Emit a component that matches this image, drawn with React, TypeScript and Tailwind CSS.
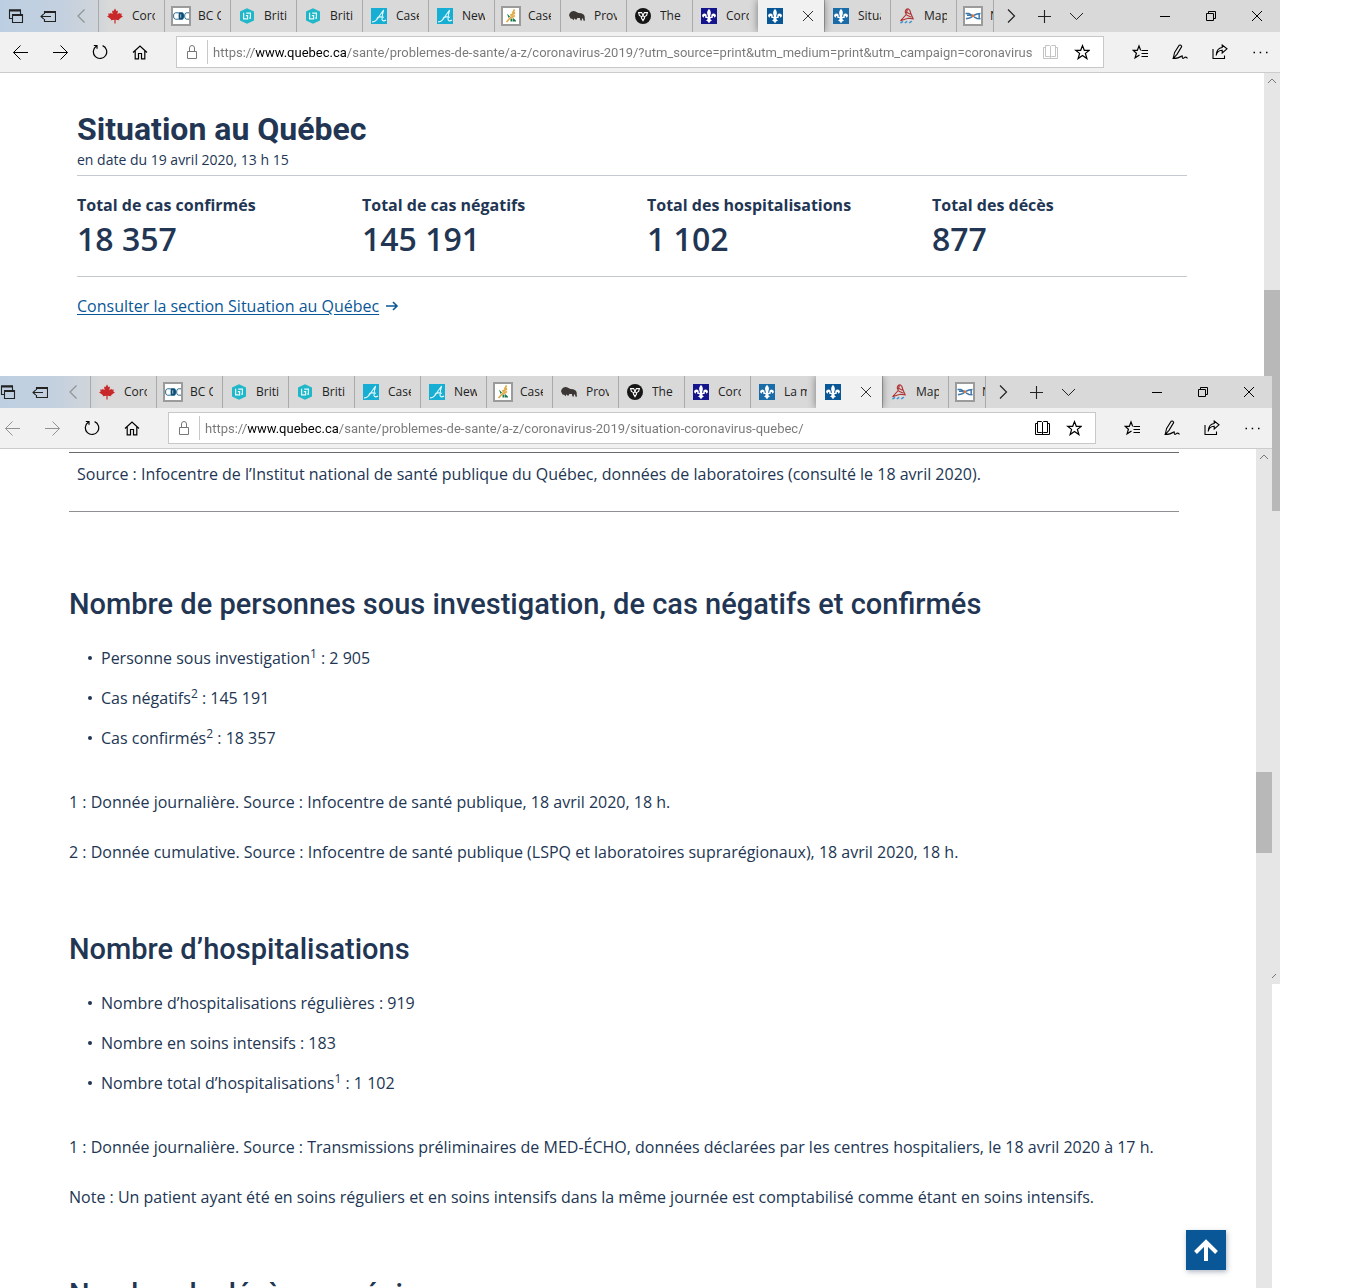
import type { ReactNode } from "react";

type IconProps = { children: ReactNode; size?: string; dim?: boolean };

function Glyph({ children, size = "size-4", dim = false }: IconProps) {
  return (
    <svg
      viewBox="0 0 16 16"
      fill="none"
      stroke="currentColor"
      strokeWidth="1"
      aria-hidden="true"
      className={`${size} shrink-0 ${dim ? "text-[#929292]" : ""}`}
    >
      {children}
    </svg>
  );
}

/* ---------- favicons ---------- */

function MapleLeaf() {
  return (
    <svg viewBox="0 0 16 16" className="size-4" aria-hidden="true">
      <path
        fill="#c8282a"
        d="M8 .6 9.6 3.2 11 2.5 10.4 6.2 12.4 4.7 12.9 5.8 15 5.4 14.2 7.5 16 8.3 12 11.2 12.3 12.2 8.6 11.8 8.6 15.5H7.4L7.4 11.8 3.7 12.2 4 11.2 0 8.3 1.8 7.5 1 5.4 3.1 5.8 3.6 4.7 5.6 6.2 5 2.5 6.4 3.2Z"
      />
    </svg>
  );
}

function BcCdc() {
  return (
    <svg viewBox="0 0 20 20" className="size-5" aria-hidden="true">
      <rect x="1" y="1" width="18" height="18" fill="#fff" stroke="#9b9b9b" strokeWidth="2" />
      <path d="M7.5 6.8H4.4Q2.5 7 2.5 10T4.4 13.2H7.5M18 6.8H15.4Q13.6 7 13.6 10T15.4 13.2H18" fill="none" stroke="#2a6f93" />
      <path d="M7.6 6.3h3.4q2 0 2 3.7t-2 3.7H7.6Z" fill="#0d4e78" />
      <path d="M9.7 8.2v3.6" stroke="#9cc3d6" />
    </svg>
  );
}

function BritishColumbia() {
  return (
    <svg viewBox="0 0 16 16" className="size-4" aria-hidden="true">
      <path d="M8 .2 15 3.6V12.4L8 15.8 1 12.4V3.6Z" fill="#20b7c9" />
      <path
        d="M4.6 4.8V10.8H8.6V7.6H6.8M7.2 5.2H11.4V10.2H10.2"
        fill="none"
        stroke="#e8fbfd"
        strokeWidth="1.2"
      />
    </svg>
  );
}

function Alberta() {
  return (
    <svg viewBox="0 0 16 16" className="size-4" aria-hidden="true">
      <rect width="16" height="16" fill="#17aed3" />
      <path
        d="M1 13.8Q4.5 14.5 8 8.5L12.6 2Q11.2 6 11 11.5Q12 14 15 12M5.8 10.6Q7 8 13 9.3"
        fill="none"
        stroke="#e6f8fc"
        strokeWidth="1.1"
      />
    </svg>
  );
}

function Saskatchewan() {
  return (
    <svg viewBox="0 0 20 20" className="size-5" aria-hidden="true">
      <rect x="1" y="1" width="18" height="18" fill="#fff" stroke="#9b9b9b" strokeWidth="2" />
      <path d="M6 7.5 9 10.5 7.5 12ZM9.5 12.5H11.5V15.5H9.5ZM12 12 15 14.5V15.5H12Z" fill="#1b7a4c" />
      <path
        d="M13.5 3.5 11.5 7.5M14 6.5 10.5 9.5M14 9.5 10 12M9.5 8 10.8 10M10.5 10.5 5.5 16"
        stroke="#e0ab48"
        strokeWidth="1.7"
      />
    </svg>
  );
}

function Bison() {
  return (
    <svg viewBox="0 0 16 16" className="size-4" aria-hidden="true">
      <path
        fill="#3c3635"
        d="M0 7.2Q.4 4.6 2.5 3.6 5 2.4 7.4 4.1L9.5 5Q12.5 5 14.6 6.4 16 7.6 15.7 9.6L15.9 12.8H14.6L14 10.8 13 10.2 12.8 12.6H11.5L10.9 10 8.2 9.9 7.8 11.5H6.2L5.6 10.2 4.4 12.2 3.2 10.8Q1.2 11 .9 9.2Z"
      />
    </svg>
  );
}

function Ontario() {
  return (
    <svg viewBox="0 0 16 16" className="size-4" aria-hidden="true">
      <circle cx="8" cy="8" r="8" fill="#161616" />
      <path
        d="M8 7.2 6.6 4.6H3.6L4.4 7.4 6.4 8.6M8 7.2 9.4 4.6H12.4L11.6 7.4 9.6 8.6M8 7.2 6.3 9.8 8 12.6 9.7 9.8Z"
        fill="none"
        stroke="#fff"
        strokeWidth="1.1"
      />
    </svg>
  );
}

function FleurDeLis({ fill }: { fill: string }) {
  return (
    <svg viewBox="0 0 16 16" className="size-4" aria-hidden="true">
      <rect width="16" height="16" fill={fill} />
      <path
        fill="#fff"
        d="M8 .7Q10.3 3.2 9.9 5.2L9 8.8H10.3Q10 5.6 12.5 5.5 15 5.6 14.9 8 14.6 9.6 13 9.4 13.2 7.8 12.2 8 11.3 8.4 11.7 9.9H9.4L9.8 12 11.2 12.6 9.5 13.2 8 15.3 6.5 13.2 4.8 12.6 6.2 12 6.6 9.9H4.3Q4.7 8.4 3.8 8 2.8 7.8 3 9.4 1.4 9.6 1.1 8 1 5.6 3.5 5.5 6 5.6 5.7 8.8H7L6.1 5.2Q5.7 3.2 8 .7Z"
      />
    </svg>
  );
}

function Lighthouse() {
  return (
    <svg viewBox="0 0 16 16" className="size-4" aria-hidden="true">
      <path
        d="M6.2 4Q6.5 1 9 .8 11.2 1.6 11.8 5.5L14.2 10.8 9 10.2 1.5 12.8 7.2 6.5ZM7 4 11.5 6.2M7.5 7 12.5 9.2M8.5 1.5 6.8 6"
        fill="none"
        stroke="#b03434"
        strokeWidth="1.1"
      />
      <path d="M1.5 15 4 13.4M5.8 15 8.2 13.4M10.2 15 12.8 13.2" stroke="#3d93cf" strokeWidth="1.5" />
    </svg>
  );
}

function Newfoundland() {
  return (
    <svg viewBox="0 0 20 20" className="size-5" aria-hidden="true">
      <rect x="1" y="1" width="18" height="18" fill="#fff" stroke="#9b9b9b" strokeWidth="2" />
      <path
        d="M2.5 7.5H6L9 9.3M3 12.8 6.5 12 9 10.8M11 9.3 14 8 17.5 7.5M11 10.8 14 12.5 17.5 12.8M16.2 8V12.5M4 9.2H7"
        fill="none"
        stroke="#3f78ac"
        strokeWidth="1.5"
      />
      <path d="M8.8 8.4 11 10.8M9 11 10.8 8.8" stroke="#d97640" strokeWidth="1.3" />
    </svg>
  );
}

/* ---------- toolbar icons ---------- */

const BackIcon = () => <path d="M16 8.5H1.5M8.5 1.5 1.5 8.5 8.5 15.5" />;
const ForwardIcon = () => <path d="M1 8.5H15.5M8.5 1.5 15.5 8.5 8.5 15.5" />;
const RefreshIcon = () => <path d="M10.6 1.6A6.7 6.7 0 1 1 4.2 2.3M1.8 1.5H5V4.8" strokeWidth="1.2" />;
const HomeIcon = () => (
  <path d="M1 8.5 8 2 15 8.5M3.2 7V14.8H6.5V9.5H9.5V14.8H12.8V7" strokeWidth="1.2" />
);
const ChevronLeft = () => <path d="M11.5 1.5 5 8 11.5 14.5" strokeWidth="1.2" />;
const ChevronRight = () => <path d="M5 1.5 11.5 8 5 14.5" strokeWidth="1.2" />;
const ChevronDown = () => <path d="M2 5 8.5 11.5 15 5" />;
const PlusIcon = () => <path d="M2 8.5H15M8.5 2V15" strokeWidth="1.1" />;
const BookIcon = () => (
  <path d="M3.5 3.5H1.5V14.5H15.5V3.5H13.5M3.5 1.5H7.5L8.5 2.5 9.5 1.5H13.5V12.5H9.5L8.5 13.5 7.5 12.5H3.5ZM8.5 2.5V14.5" />
);
const StarIcon = () => (
  <path
    d="M8.5 1.6 10.3 6.3H15.4L11.4 9.4 12.9 14.6 8.5 11.5 4.1 14.6 5.6 9.4 1.6 6.3H6.7Z"
    strokeWidth="1.2"
  />
);
const HubIcon = () => (
  <path d="M9.5 6.5H16M9.5 9.5H16M9.5 12.5H16M8.7 6.4 7 2 5.3 6.4H1.3L4.4 9.2 3.1 13.8 7.5 11" strokeWidth="1.2" />
);
const PenIcon = () => (
  <path d="M1.2 14.5 2.6 8.4 7.2 1.2Q9.2.4 9.7 2.6L5 10.4 1.2 14.5Q6.5 14.4 9.2 12.2 10.8 11 10.2 13.2 10.5 15.5 13 13.2 14.2 13 15.5 14.3" strokeWidth="1.1" />
);
const ShareIcon = () => (
  <path d="M1 5V14.5H12.5V11.5M4.2 11.5Q5 6.5 10.2 6.3V9L15 4.8 10.2 1V3.5Q4.5 4 4.2 11.5Z" strokeWidth="1.1" />
);
const MoreIcon = () => <path d="M1.5 8.5H3M7.7 8.5H9.2M14 8.5H15.5" strokeWidth="1.5" />;
const TabsAsideIcon = () => (
  <>
    <path d="M4.5 10.5H1.5V2M1 2H13M12.5 2V6M5 7H15M4.5 6V14.5H14.5V6" strokeWidth="1.1" />
    <path d="M1 2.5H13M4 7H15" strokeWidth="2" />
  </>
);
const SetAsideIcon = () => (
  <path d="M4.5 6V3.5H15.5V13.5H4.5V11M4.5 4.5H15.5M11 8.5H1M3.8 5.8 1 8.5 3.8 11.2" strokeWidth="1.1" />
);
const MinimizeIcon = () => <path d="M3 8.5H13" />;
const RestoreIcon = () => <path d="M3.5 5.5H10.5V12.5H3.5ZM5.5 5.5V3.5H12.5V10.5H10.5" />;
const CloseIcon = () => <path d="M3 3 13 13M13 3 3 13" />;

/* ---------- browser window ---------- */

type Tab = { label?: string; name: string; icon: ReactNode; active?: boolean };

const leadingTabs: Tab[] = [
  { name: "Coronavirus Canada", label: "Coro", icon: <MapleLeaf /> },
  { name: "BC Centre", label: "BC C", icon: <BcCdc /> },
  { name: "British Columbia 1", label: "Briti", icon: <BritishColumbia /> },
  { name: "British Columbia 2", label: "Briti", icon: <BritishColumbia /> },
  { name: "Alberta cases", label: "Case", icon: <Alberta /> },
  { name: "Alberta news", label: "New", icon: <Alberta /> },
  { name: "Saskatchewan cases", label: "Case", icon: <Saskatchewan /> },
  { name: "Province of Manitoba", label: "Prov", icon: <Bison /> },
  { name: "Ontario", label: "The", icon: <Ontario /> },
  { name: "Coronavirus Québec", label: "Coro", icon: <FleurDeLis fill="#14148c" /> },
];

const trailingTabs: Tab[] = [{ name: "Map", label: "Map", icon: <Lighthouse /> }];

function TabItem({ tab }: { tab: Tab }) {
  if (tab.active) {
    return (
      <div className="z-10 flex w-[66px] shrink-0 items-center gap-[15px] bg-[#f1f1f1] pl-[7px] shadow-[0_0_8px_rgba(0,0,0,0.45)]">
        <span className="grid size-5 place-items-center">{tab.icon}</span>
        <button aria-label="Fermer l’onglet" className="grid place-items-center text-[#333]">
          <Glyph>
            <CloseIcon />
          </Glyph>
        </button>
      </div>
    );
  }
  return (
    <button
      aria-label={tab.name}
      className="flex w-[66px] shrink-0 items-center gap-[7px] border-l border-[#aaaaaa] pl-1.5"
    >
      <span className="grid size-5 shrink-0 place-items-center">{tab.icon}</span>
      <span className="w-[23px] overflow-hidden text-left whitespace-nowrap">{tab.label}</span>
    </button>
  );
}

function ToolButton({
  label,
  dim,
  width = "w-10",
  children,
}: {
  label: string;
  dim?: boolean;
  width?: string;
  children: ReactNode;
}) {
  return (
    <button aria-label={label} className={`grid h-full shrink-0 place-items-center ${width}`}>
      <Glyph dim={dim}>{children}</Glyph>
    </button>
  );
}

type WindowProps = {
  id: string;
  tabs: Tab[];
  url: string;
  historyEnabled: boolean;
  readable: boolean;
  thumb: ReactNode;
  children: ReactNode;
};

function BrowserWindow({ id, tabs, url, historyEnabled, readable, thumb, children }: WindowProps) {
  return (
    <div className="flex h-full flex-col bg-white">
      <header className="flex h-8 shrink-0 overflow-hidden bg-[linear-gradient(90deg,#bccfe2,#c3d0df_60px,#d0d5da_98px,#d9d9d9_110px)] text-[12px] text-[#222]">
        <ToolButton label="Onglets mis de côté" width="w-8">
          <TabsAsideIcon />
        </ToolButton>
        <ToolButton label="Mettre les onglets de côté" width="w-8">
          <SetAsideIcon />
        </ToolButton>
        <ToolButton label="Onglets précédents" width="w-[34px]" dim>
          <ChevronLeft />
        </ToolButton>
        <nav aria-label="Onglets" className="flex">
          {tabs.map((tab) => (
            <TabItem key={tab.name} tab={tab} />
          ))}
          <button
            aria-label="Newfoundland"
            className="flex w-[38px] shrink-0 items-center gap-[7px] overflow-hidden border-x border-[#aaaaaa] pl-1.5"
          >
            <span className="size-5 shrink-0">
              <Newfoundland />
            </span>
            <span className="w-1 overflow-hidden">N</span>
          </button>
        </nav>
        <ToolButton label="Onglets suivants" width="w-[34px]">
          <ChevronRight />
        </ToolButton>
        <ToolButton label="Nouvel onglet" width="w-8">
          <PlusIcon />
        </ToolButton>
        <ToolButton label="Aperçu des onglets" width="w-8">
          <ChevronDown />
        </ToolButton>
        <div className="ml-auto flex text-black">
          <ToolButton label="Réduire" width="w-[46px]">
            <MinimizeIcon />
          </ToolButton>
          <ToolButton label="Restaurer" width="w-[46px]">
            <RestoreIcon />
          </ToolButton>
          <ToolButton label="Fermer" width="w-[46px]">
            <CloseIcon />
          </ToolButton>
        </div>
      </header>

      <div className="flex h-[41px] shrink-0 items-center border-b border-[#cccccc] bg-[#f1f1f1] text-black">
        <ToolButton label="Précédent" dim={!historyEnabled}>
          <BackIcon />
        </ToolButton>
        <ToolButton label="Suivant" dim={!historyEnabled}>
          <ForwardIcon />
        </ToolButton>
        <ToolButton label="Actualiser">
          <RefreshIcon />
        </ToolButton>
        <ToolButton label="Accueil">
          <HomeIcon />
        </ToolButton>
        <div className="ml-4 flex h-8 min-w-0 flex-1 items-center border border-[#c8c8c8] bg-white">
          <label htmlFor={id} aria-label="Adresse" className="grid h-6 w-[31px] place-items-center border-r border-[#c8c8c8] text-[#777]">
            <Glyph>
              <path d="M3.5 7.5H12.5V14.5H3.5ZM5.5 7.5V4Q5.5 1.5 8 1.5T10.5 4V7.5" />
            </Glyph>
          </label>
          <input
            id={id}
            type="text"
            defaultValue={url}
            className="ml-[5px] h-6 min-w-0 flex-1 bg-[linear-gradient(90deg,#777_41px,#000_41px,#000_133px,#777_133px)] bg-clip-text font-['Roboto'] text-[13px] text-transparent outline-none"
          />
          <div className="flex h-full w-[71px] items-center">
            <button aria-label="Mode lecture" className={readable ? "ml-2.5" : "ml-2.5 text-[#c4c4c4]"}>
              <Glyph>
                <BookIcon />
              </Glyph>
            </button>
            <button aria-label="Ajouter aux favoris" className="ml-4">
              <Glyph>
                <StarIcon />
              </Glyph>
            </button>
          </div>
        </div>
        <div className="ml-4 flex h-full">
          <ToolButton label="Favoris">
            <HubIcon />
          </ToolButton>
          <ToolButton label="Ajouter des notes">
            <PenIcon />
          </ToolButton>
          <ToolButton label="Partager">
            <ShareIcon />
          </ToolButton>
          <ToolButton label="Paramètres">
            <MoreIcon />
          </ToolButton>
        </div>
      </div>

      <div className="flex min-h-0 flex-1">
        <main className="relative min-w-0 flex-1 overflow-hidden">{children}</main>
        <div className="flex w-4 shrink-0 flex-col bg-[#e6e6e6]">
          <svg viewBox="0 0 16 16" fill="none" stroke="#777" className="size-4 shrink-0" aria-hidden="true">
            <path d="M4 10 8 6 12 10" />
          </svg>
          {thumb}
          <svg viewBox="0 0 16 16" fill="none" stroke="#777" className="mt-auto size-4 shrink-0" aria-hidden="true">
            <path d="M4 6 8 10 12 6" />
          </svg>
        </div>
      </div>
    </div>
  );
}

/* ---------- page content ---------- */

const totals = [
  { label: "Total de cas confirmés", value: "18 357" },
  { label: "Total de cas négatifs", value: "145 191" },
  { label: "Total des hospitalisations", value: "1 102" },
  { label: "Total des décès", value: "877" },
];

function SummaryPage() {
  return (
    <div className="mx-auto max-w-[1110px] pt-9 text-[#223654]">
      <h1 className="font-[Roboto] text-[32px] leading-10 font-bold">Situation au Québec</h1>
      <p className="pt-px pb-[5px] text-[14px] leading-5">en date du 19 avril 2020, 13 h 15</p>
      <dl className="grid grid-cols-4 gap-[30px] border-y border-[#c5cad2] pt-[17px] pb-[17px]">
        {totals.map((t) => (
          <div key={t.label}>
            <dt className="text-[16px] leading-6 font-bold">{t.label}</dt>
            <dd className="pt-0.5 text-[32px] leading-10 font-semibold">{t.value}</dd>
          </div>
        ))}
      </dl>
      <p className="pt-[17px] text-[16px] leading-6">
        <a href="#situation" className="inline-flex items-center gap-1.5 text-[#095797]">
          <span className="underline underline-offset-2">Consulter la section Situation au Québec</span>
          <svg viewBox="0 0 14 14" className="size-3.5" fill="none" stroke="currentColor" strokeWidth="1.6" aria-hidden="true">
            <path d="M1 7H12M8 3 12 7 8 11" />
          </svg>
        </a>
      </p>
    </div>
  );
}

type Item = { before: string; note?: string; value: string };

function Section({ title, items, notes }: { title: string; items: Item[]; notes: string[] }) {
  return (
    <section className="pb-[67px]">
      <h2 className="font-[Roboto] text-[29px] leading-9 font-medium">{title}</h2>
      <ul className="flex flex-col gap-4 pt-6 pb-3.5 pl-[19px]">
        {items.map((item) => (
          <li
            key={item.before}
            className="flex items-center gap-[9px] leading-6 before:size-1 before:rounded-full before:bg-[#223654]"
          >
            <span>
              {item.before}
              {item.note && <sup className="text-[12px]">{item.note}</sup>} : {item.value}
            </span>
          </li>
        ))}
      </ul>
      {notes.map((note) => (
        <p key={note} className="pt-[26px] leading-6">
          {note}
        </p>
      ))}
    </section>
  );
}

function DetailsPage() {
  return (
    <>
      <div className="mx-auto max-w-[1110px] pt-[3px] text-[16px] text-[#223654]">
        <p className="mb-[74px] border-t border-b border-t-[#6b6b6f] border-b-[#8f9094] px-2 pt-[9px] pb-[25px] leading-6">
          Source : Infocentre de l’Institut national de santé publique du Québec, données de laboratoires (consulté
          le 18 avril 2020).
        </p>
        <Section
          title="Nombre de personnes sous investigation, de cas négatifs et confirmés"
          items={[
            { before: "Personne sous investigation", note: "1", value: "2 905" },
            { before: "Cas négatifs", note: "2", value: "145 191" },
            { before: "Cas confirmés", note: "2", value: "18 357" },
          ]}
          notes={[
            "1 : Donnée journalière. Source : Infocentre de santé publique, 18 avril 2020, 18 h.",
            "2 : Donnée cumulative. Source : Infocentre de santé publique (LSPQ et laboratoires suprarégionaux), 18 avril 2020, 18 h.",
          ]}
        />
        <Section
          title="Nombre d’hospitalisations"
          items={[
            { before: "Nombre d’hospitalisations régulières", value: "919" },
            { before: "Nombre en soins intensifs", value: "183" },
            { before: "Nombre total d’hospitalisations", note: "1", value: "1 102" },
          ]}
          notes={[
            "1 : Donnée journalière. Source : Transmissions préliminaires de MED-ÉCHO, données déclarées par les centres hospitaliers, le 18 avril 2020 à 17 h.",
            "Note : Un patient ayant été en soins réguliers et en soins intensifs dans la même journée est comptabilisé comme étant en soins intensifs.",
          ]}
        />
        <h2 className="font-[Roboto] text-[29px] leading-9 font-medium">Nombre de décès par région</h2>
      </div>
      <button
        aria-label="Retour en haut"
        className="absolute right-[30px] bottom-[34px] grid size-10 place-items-center bg-[#095797] text-white shadow-[1px_2px_5px_rgba(34,54,84,0.35)]"
      >
        <svg viewBox="0 0 24 24" className="size-6" fill="none" stroke="currentColor" strokeWidth="4" aria-hidden="true">
          <path d="M12 23V4M1.5 14.5 12 4 22.5 14.5" />
        </svg>
      </button>
    </>
  );
}

export default function App() {
  return (
    <div className="relative h-screen overflow-hidden bg-white font-['Open_Sans',sans-serif]">
      <div className="absolute top-0 right-[92px] bottom-[304px] left-0">
        <BrowserWindow
          id="adresse-sommaire"
          tabs={[
            ...leadingTabs,
            { name: "Coronavirus 2019", icon: <FleurDeLis fill="#095797" />, active: true },
            { name: "Situation", label: "Situa", icon: <FleurDeLis fill="#1a6ca8" /> },
            ...trailingTabs,
          ]}
          url="https://www.quebec.ca/sante/problemes-de-sante/a-z/coronavirus-2019/?utm_source=print&utm_medium=print&utm_campaign=coronavirus-2020"
          historyEnabled
          readable={false}
          thumb={<div className="mt-[201px] h-[221px] bg-[#b8b8b8]" />}
        >
          <SummaryPage />
        </BrowserWindow>
      </div>
      <div className="absolute top-[376px] right-[100px] -bottom-4 -left-2">
        <BrowserWindow
          id="adresse-situation"
          tabs={[
            ...leadingTabs,
            { name: "La maladie", label: "La maladie", icon: <FleurDeLis fill="#1a6ca8" /> },
            { name: "Situation au Québec", icon: <FleurDeLis fill="#095797" />, active: true },
            ...trailingTabs,
          ]}
          url="https://www.quebec.ca/sante/problemes-de-sante/a-z/coronavirus-2019/situation-coronavirus-quebec/"
          historyEnabled={false}
          readable
          thumb={<div className="mt-[307px] h-[81px] bg-[#b8b8b8]" />}
        >
          <DetailsPage />
        </BrowserWindow>
      </div>
    </div>
  );
}
